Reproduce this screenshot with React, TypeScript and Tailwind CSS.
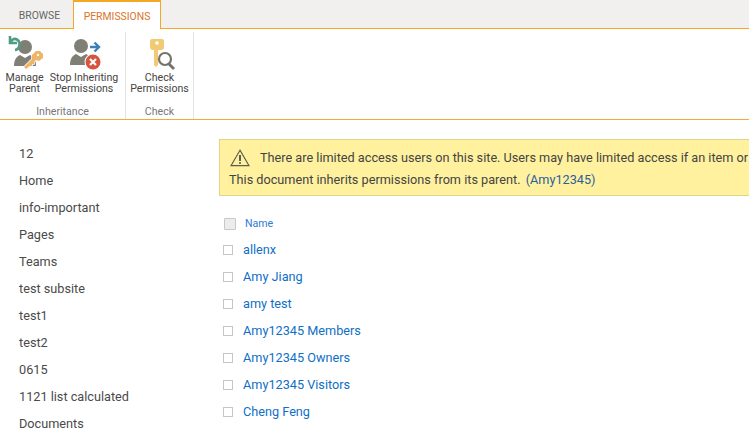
const navItems = [
  "12",
  "Home",
  "info-important",
  "Pages",
  "Teams",
  "test subsite",
  "test1",
  "test2",
  "0615",
  "1121 list calculated",
  "Documents",
];

const people = [
  "allenx",
  "Amy Jiang",
  "amy test",
  "Amy12345 Members",
  "Amy12345 Owners",
  "Amy12345 Visitors",
  "Cheng Feng",
];

const Person = () => (
  <g fill="#7f7f75">
    <circle cx="11" cy="7" r="7" />
    <path d="M0 26c0-6 2-9 6-11l5 3 5-3c4 2 6 5 6 11z" />
  </g>
);

const IconManageParent = () => (
  <svg width="36" height="36" viewBox="0 0 36 36">
    <g transform="translate(7 6)">
      <Person />
    </g>
    <path
      d="M3 2v7h7M3.500 8c2-3 4.500-3.500 6.500-2.500 3 1.500 3.500 6 1 9-1 1-2 1.500-3 1.500"
      fill="none"
      stroke="#4f9d84"
      strokeWidth="2.600"
    />
    <path d="M19 35l-2-2 8-8 0-4 4-4h4l3 3v4l-4 3-3-1-2 2v2h-2v2h-2z" fill="#fff" stroke="#fff" strokeWidth="1.500" />
    <path d="M19 35l-2-2 8-8 0-4 4-4h4l3 3v4l-4 3-3-1-2 2v2h-2v2h-2z" fill="#eeb566" />
    <circle cx="31" cy="21" r="1.200" fill="#fff" />
  </svg>
);

const IconStopInheriting = () => (
  <svg width="36" height="36" viewBox="0 0 36 36">
    <g transform="translate(4 5)">
      <Person />
    </g>
    <path d="M24 13h9M28.500 8.500l4.500 4.500-4.500 4.500" fill="none" stroke="#3d80b5" strokeWidth="2.400" />
    <circle cx="27" cy="28" r="8.500" fill="#fff" />
    <circle cx="27" cy="28" r="7.500" fill="#d9543f" />
    <path d="M24 25l6 6M30 25l-6 6" stroke="#fff" strokeWidth="2.200" />
  </svg>
);

const IconCheckPermissions = () => (
  <svg width="36" height="36" viewBox="0 0 36 36">
    <path
      d="M10 5h10a2 2 0 0 1 2 2v6a3 3 0 0 1-3 3h-3v15l-2 2-2-2V16h-2a3 3 0 0 1-2-3V7a2 2 0 0 1 2-2z"
      fill="#f2ca73"
    />
    <circle cx="15" cy="9" r="1.800" fill="#fff" />
    <circle cx="23" cy="25" r="6" fill="#fff" stroke="#73736a" strokeWidth="2.200" />
    <path d="M27 30l5 5" stroke="#73736a" strokeWidth="2.800" />
  </svg>
);

const IconWarning = () => (
  <svg width="20" height="18" viewBox="0 0 20 18">
    <path d="M10 1.200L1 16.600h18z" fill="none" stroke="#5c5c52" strokeWidth="1.100" />
    <path d="M10 6v6" stroke="#5c5c52" strokeWidth="2" />
    <circle cx="10" cy="14" r="1.100" fill="#5c5c52" />
  </svg>
);

const RibbonButton = ({
  icon,
  lines,
  className,
}: {
  icon: React.ReactNode;
  lines: string[];
  className: string;
}) => (
  <div className={`flex flex-col items-center ${className}`}>
    <div className="h-[36px]">{icon}</div>
    <div className="mt-[2px] text-center text-[10.6px] leading-[11px] whitespace-nowrap text-[#444444]">
      {lines.map((line) => (
        <div key={line}>{line}</div>
      ))}
    </div>
  </div>
);

export default function App() {
  return (
    <div className="h-[428px] w-[749px] overflow-hidden bg-white font-['Roboto',sans-serif]">
      <div className="flex h-[29px] border-b border-[#f5a623] bg-[#f1f0ef] text-[10.4px] text-[#666666]">
        <div className="flex w-[73px] items-center justify-center pt-[3px] pl-[6px]">BROWSE</div>
        <div className="z-10 flex h-[29px] w-[88px] items-center justify-center border-x border-t-2 border-b-0 border-[#f5a623] bg-white pt-[2px] text-[#d9742b]">
          PERMISSIONS
        </div>
      </div>

      <div className="flex h-[91px] border-b border-[#f4a93c] bg-white">
        <div className="mt-[3px] flex w-[126px] flex-col border-r border-[#e3e3e3]">
          <div className="flex flex-1 pt-[2px]">
            <RibbonButton icon={<IconManageParent />} lines={["Manage", "Parent"]} className="w-[49px]" />
            <RibbonButton icon={<IconStopInheriting />} lines={["Stop Inheriting", "Permissions"]} className="w-[70px]" />
          </div>
          <div className="text-center text-[10.6px] leading-[14px] text-[#777777]">Inheritance</div>
        </div>
        <div className="mt-[3px] flex w-[68px] flex-col border-r border-[#e3e3e3]">
          <div className="flex flex-1 justify-center pt-[2px]">
            <RibbonButton icon={<IconCheckPermissions />} lines={["Check", "Permissions"]} className="w-[67px]" />
          </div>
          <div className="text-center text-[10.6px] leading-[14px] text-[#777777]">Check</div>
        </div>
      </div>

      <div className="flex">
        <nav className="w-[219px] shrink-0 pt-[20px] pl-[19px] text-[12.7px] leading-[27px] text-[#4a4a4a]">
          {navItems.map((item) => (
            <div key={item}>{item}</div>
          ))}
        </nav>

        <main className="flex-1 pt-[19px]">
          <div className="h-[57px] w-[560px] border border-[#dcd68a] bg-[#fff19e] pt-[7px] pl-[10px] text-[12.7px] leading-[21px] whitespace-nowrap text-[#444444]">
            <div className="flex items-center">
              <IconWarning />
              <span className="ml-[10px]">
                There are limited access users on this site. Users may have limited access if an item or
              </span>
            </div>
            <div className="mt-[1px] -ml-[1px]">
              This document inherits permissions from its parent.{" "}
              <span className="ml-[2px] text-[#2b5f9e]">(Amy12345)</span>
            </div>
          </div>

          <div className="mt-[18px] flex h-[20px] items-center pl-[5px]">
            <div className="h-[12px] w-[12px] rounded-[1px] border border-[#c8c8c8] bg-[#ececec]" />
            <span className="ml-[9px] text-[10.6px] text-[#2b7cd3]">Name</span>
          </div>

          <div className="mt-[2px]">
            {people.map((name) => (
              <div key={name} className="flex h-[27px] items-center pl-[4px]">
                <div className="h-[10px] w-[10px] border border-[#c6c6c6]" />
                <span className="ml-[10px] text-[12.7px] text-[#0f6fc6]">{name}</span>
              </div>
            ))}
          </div>
        </main>
      </div>
    </div>
  );
}
